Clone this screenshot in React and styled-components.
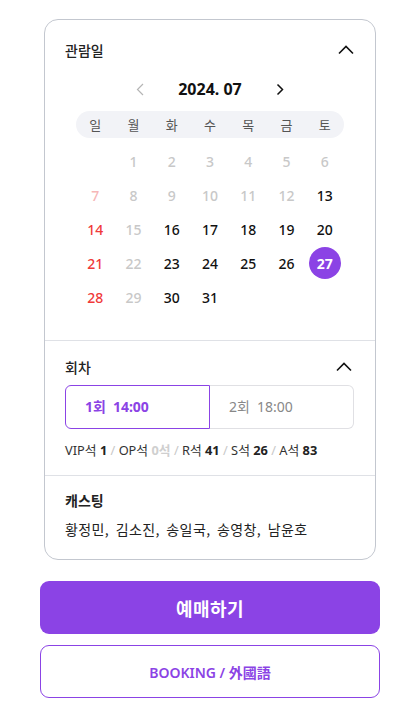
import React from "react";
import styled, { createGlobalStyle } from "styled-components";

const PURPLE = "#8b43e5";

const Global = createGlobalStyle`
  html, body { margin: 0; padding: 0; background: #fff; }
  body {
    font-family: "Noto Sans", "Noto Sans CJK KR", sans-serif;
    color: #111;
    -webkit-font-smoothing: antialiased;
  }
  * { box-sizing: border-box; }
`;

const Page = styled.div`
  padding: 19px 36px 0 40px;
  width: 416px;
`;

const Card = styled.div`
  margin: 0 4px;
  border: 1px solid #c3c7cf;
  border-radius: 14px;
  background: #fff;
`;

const Section = styled.section`
  padding: ${(p) => p.$pad};
  border-bottom: ${(p) => (p.$last ? "none" : "1px solid #dfe1e6")};
`;

const Header = styled.div`
  display: flex;
  align-items: center;
  justify-content: space-between;
  height: 20px;
`;

const Title = styled.h3`
  margin: 0;
  font-family: "Noto Sans CJK KR", sans-serif;
  font-size: 14px;
  font-weight: ${(p) => (p.$bold ? 700 : 500)};
  line-height: 20px;
  color: #222;
`;

const IconBtn = styled.span`
  display: flex;
  align-items: center;
  justify-content: center;
  width: ${(p) => p.$w || 20}px;
  height: 20px;
  margin-right: ${(p) => p.$mr || 0}px;
`;

const MonthNav = styled.div`
  display: flex;
  align-items: center;
  justify-content: center;
  gap: 28px;
  height: 22px;
  margin-top: 18px;
`;

const MonthLabel = styled.span`
  font-family: "Noto Sans", sans-serif;
  font-size: 16px;
  font-weight: 700;
  line-height: 22px;
  color: #111;
`;

const WeekBar = styled.div`
  width: 268px;
  margin: 11px auto 0;
  height: 27px;
  border-radius: 14px;
  background: #f2f3f7;
  display: grid;
  grid-template-columns: repeat(7, 1fr);
  align-items: center;
`;

const WeekDay = styled.span`
  text-align: center;
  font-family: "Noto Sans CJK KR", sans-serif;
  font-size: 13px;
  color: #555;
  line-height: 27px;
`;

const DayGrid = styled.div`
  width: 268px;
  margin: 6px auto 0;
  display: grid;
  grid-template-columns: repeat(7, 1fr);
  grid-auto-rows: 34px;
`;

const dayColor = {
  normal: "#111",
  off: "#c8c8c8",
  sun: "#f03a3a",
  sunOff: "#f6b7b7",
  sel: "#fff",
};

const Day = styled.span`
  display: flex;
  align-items: center;
  justify-content: center;
  font-family: "Noto Sans", sans-serif;
  font-size: 14px;
  font-weight: 500;
  color: ${(p) => dayColor[p.$state]};
`;

const SelCircle = styled.span`
  display: flex;
  align-items: center;
  justify-content: center;
  width: 32px;
  height: 32px;
  border-radius: 50%;
  background: ${PURPLE};
  font-weight: 700;
`;

const Sessions = styled.div`
  display: flex;
  margin-top: 8px;
  height: 44px;
`;

const SessionBtn = styled.button`
  flex: 1;
  display: flex;
  align-items: center;
  gap: 7px;
  padding: 0 0 0 19px;
  background: #fff;
  font-family: "Noto Sans", "Noto Sans CJK KR", sans-serif;
  font-size: 14px;
  line-height: 20px;
  cursor: pointer;
  border: 1px solid ${(p) => (p.$active ? PURPLE : "#e0e0e4")};
  border-left: ${(p) => (p.$active ? `1px solid ${PURPLE}` : "none")};
  border-radius: ${(p) => (p.$active ? "6px 0 0 6px" : "0 6px 6px 0")};
  color: ${(p) => (p.$active ? PURPLE : "#888")};
  font-weight: ${(p) => (p.$active ? 700 : 400)};
`;

const Seats = styled.p`
  margin: 11px 0 0;
  font-family: "Noto Sans", "Noto Sans CJK KR", sans-serif;
  font-size: 12.8px;
  line-height: 20px;
  color: #333;
`;

const SeatVal = styled.b`
  font-weight: 700;
  color: ${(p) => (p.$empty ? "#cfcfcf" : "#222")};
`;

const Slash = styled.span`
  color: #c8c8c8;
`;

const Cast = styled.p`
  margin: 9px 0 0;
  font-family: "Noto Sans CJK KR", sans-serif;
  font-size: 14px;
  line-height: 20px;
  letter-spacing: 0.4px;
  word-spacing: 3px;
  color: #222;
`;

const Actions = styled.div`
  display: flex;
  flex-direction: column;
  gap: 11px;
  margin-top: 21px;
`;

const PrimaryBtn = styled.button`
  height: 53px;
  border: none;
  border-radius: 9px;
  background: ${PURPLE};
  color: #fff;
  font-family: "Noto Sans CJK KR", sans-serif;
  font-size: 18px;
  font-weight: 700;
  letter-spacing: 0.5px;
  cursor: pointer;
`;

const OutlineBtn = styled.button`
  height: 53px;
  border: 1px solid ${PURPLE};
  border-radius: 9px;
  background: #fff;
  color: ${PURPLE};
  font-family: "Noto Sans", "Noto Sans CJK KR", sans-serif;
  font-size: 14px;
  font-weight: 600;
  cursor: pointer;
`;

const ChevronUp = () => (
  <svg width="16" height="10" viewBox="0 0 16 10" fill="none">
    <path d="M1 8.5 L8 1.5 L15 8.5" stroke="#111" strokeWidth="1.6" />
  </svg>
);

const ChevronLeft = () => (
  <svg width="10" height="13" viewBox="0 0 10 13" fill="none">
    <path d="M8 1 L2.5 6.5 L8 12" stroke="#b5b5b5" strokeWidth="1.2" />
  </svg>
);

const ChevronRight = () => (
  <svg width="10" height="13" viewBox="0 0 10 13" fill="none">
    <path d="M2.5 1.5 L7.5 6.5 L2.5 11.5" stroke="#111" strokeWidth="1.5" />
  </svg>
);

const weekdays = ["일", "월", "화", "수", "목", "금", "토"];

const offDays = new Set([1, 2, 3, 4, 5, 6, 7, 8, 9, 10, 11, 12, 15, 22, 29]);

function dayState(d) {
  const isSun = d % 7 === 0;
  if (d === 27) return "sel";
  if (isSun) return offDays.has(d) ? "sunOff" : "sun";
  return offDays.has(d) ? "off" : "normal";
}

const seats = [
  ["VIP석", "1"],
  ["OP석", "0석", true],
  ["R석", "41"],
  ["S석", "26"],
  ["A석", "83"],
];

export default function App() {
  const cells = [null];
  for (let d = 1; d <= 31; d++) cells.push(d);

  return (
    <>
      <Global />
      <Page>
        <Card>
          <Section $pad="20px 20px 26px">
            <Header>
              <Title>관람일</Title>
              <IconBtn $mr={-1}>
                <ChevronUp />
              </IconBtn>
            </Header>
            <MonthNav>
              <IconBtn>
                <ChevronLeft />
              </IconBtn>
              <MonthLabel>2024. 07</MonthLabel>
              <IconBtn>
                <ChevronRight />
              </IconBtn>
            </MonthNav>
            <WeekBar>
              {weekdays.map((w) => (
                <WeekDay key={w}>{w}</WeekDay>
              ))}
            </WeekBar>
            <DayGrid>
              {cells.map((d, i) => {
                if (d === null) return <span key={"e" + i} />;
                const st = dayState(d);
                return (
                  <Day key={d} $state={st}>
                    {st === "sel" ? <SelCircle>{d}</SelCircle> : d}
                  </Day>
                );
              })}
            </DayGrid>
          </Section>
          <Section $pad="16px 21px 15px 20px">
            <Header>
              <Title>회차</Title>
              <IconBtn>
                <ChevronUp />
              </IconBtn>
            </Header>
            <Sessions>
              <SessionBtn $active>
                <span>1회</span>
                <span>14:00</span>
              </SessionBtn>
              <SessionBtn>
                <span>2회</span>
                <span>18:00</span>
              </SessionBtn>
            </Sessions>
            <Seats>
              {seats.map(([name, val, empty], i) => (
                <React.Fragment key={name}>
                  {i > 0 && <Slash> / </Slash>}
                  {name} <SeatVal $empty={empty}>{val}</SeatVal>
                </React.Fragment>
              ))}
            </Seats>
          </Section>
          <Section $pad="14px 20px 20px" $last>
            <Title $bold>캐스팅</Title>
            <Cast>황정민, 김소진, 송일국, 송영창, 남윤호</Cast>
          </Section>
        </Card>
        <Actions>
          <PrimaryBtn>예매하기</PrimaryBtn>
          <OutlineBtn>BOOKING / 外國語</OutlineBtn>
        </Actions>
      </Page>
    </>
  );
}
